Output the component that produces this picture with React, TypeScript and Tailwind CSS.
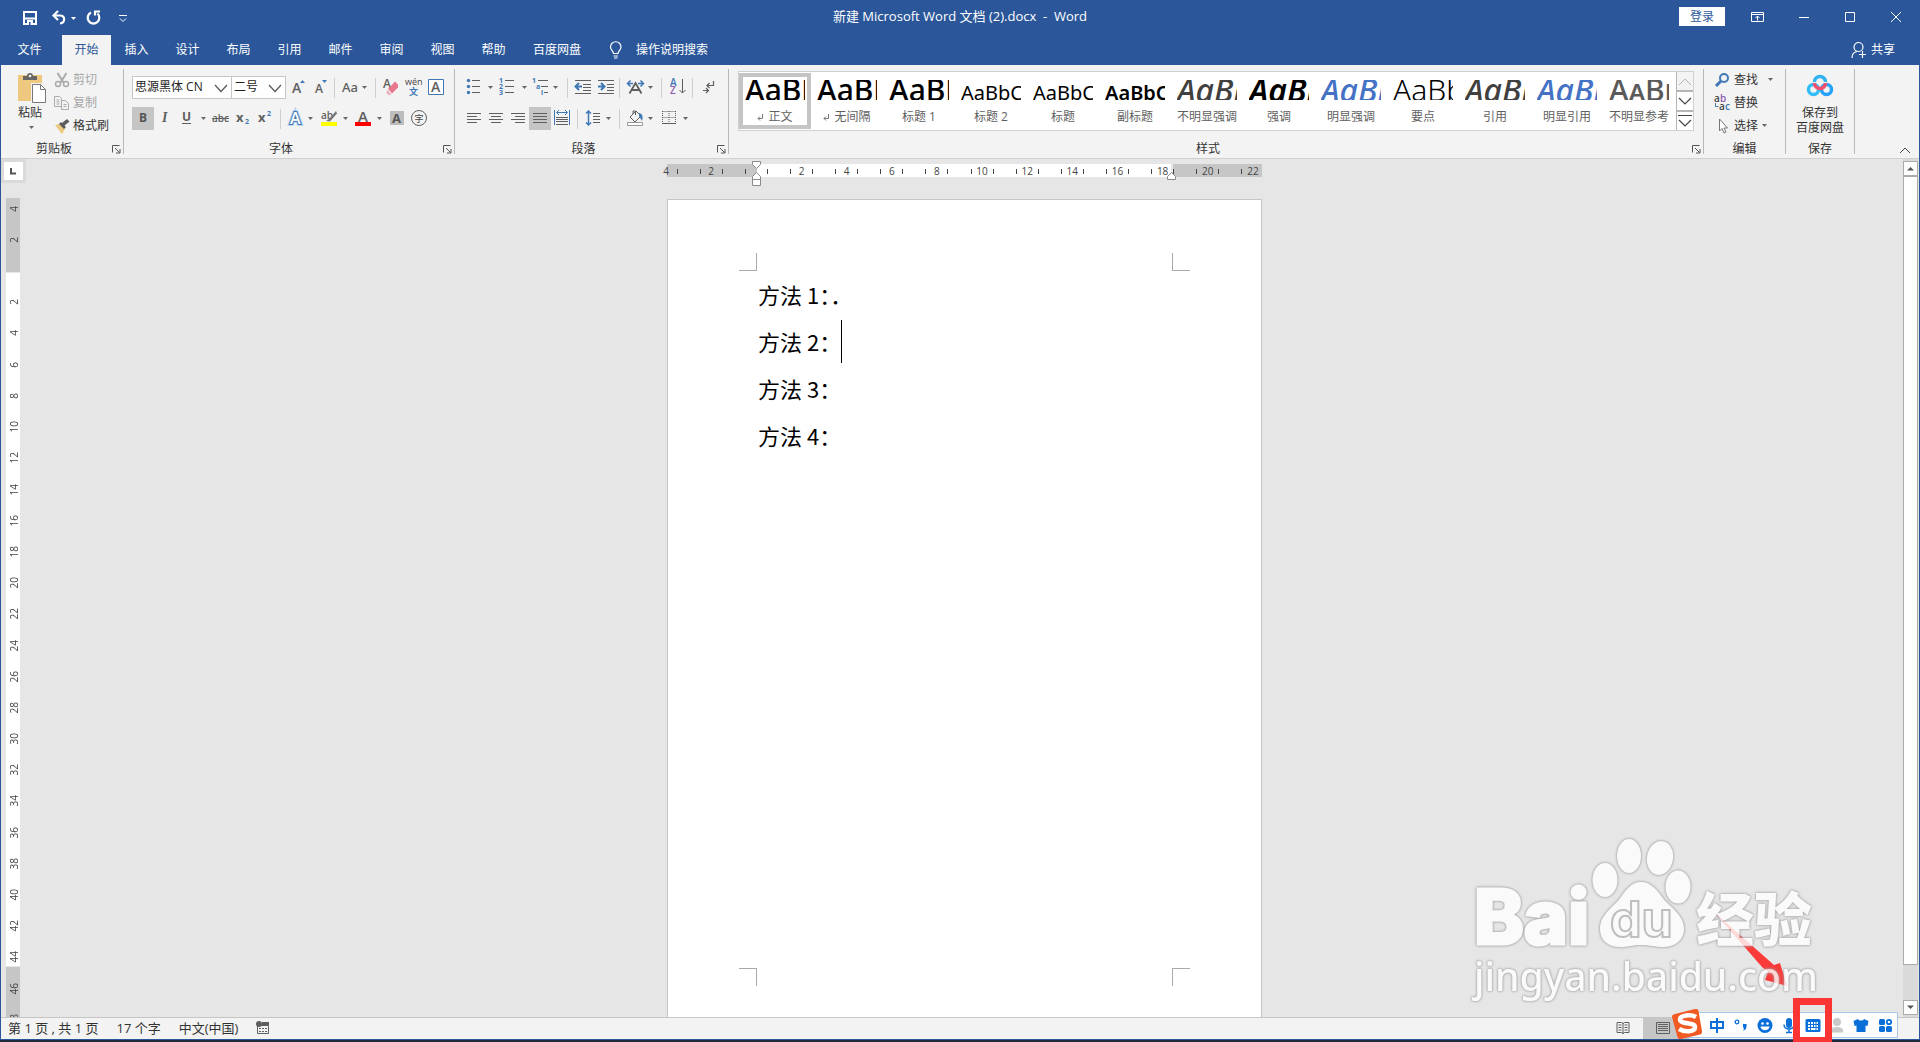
import React from "react";

const G = "#5f5f5f";
const B = "#3f78b5";
const SANS = '"Open Sans","Noto Sans CJK SC",sans-serif';

type IconProps = { w: number; h?: number; children: React.ReactNode };

function Icon({ w, h = 23, children }: IconProps) {
  return (
    <svg width={w} height={h} viewBox={`0 0 ${w} ${h}`} fill="none" fontFamily={SANS} aria-hidden="true" className="block shrink-0">
      {children}
    </svg>
  );
}

function Tool({ label, on, w, children }: { label: string; on?: boolean; w: number; children: React.ReactNode }) {
  return (
    <button type="button" aria-label={label} title={label} className={on ? "shrink-0 bg-[#c5c5c5]" : "shrink-0 hover:bg-[#dcdcdc]"}>
      <Icon w={w}>{children}</Icon>
    </button>
  );
}

const Drop = ({ x, y = 10 }: { x: number; y?: number }) => <path d={`M${x} ${y}h5l-2.5 3z`} fill="#666" />;

const Sep = ({ className }: { className: string }) => <div className={`h-5 w-px shrink-0 bg-[#cfcfcf] ${className}`} />;

const Launcher = ({ label }: { label: string }) => (
  <button type="button" aria-label={label} className="absolute right-0.5 bottom-1">
    <Icon w={9} h={9}>
      <path d="M.5 7.500V.5H7.500M3 3l4.500 4.500M8 4v4H4" stroke="#555" />
    </Icon>
  </button>
);

function Group({ name, className, launcher, children }: { name: string; className: string; launcher?: boolean; children: React.ReactNode }) {
  return (
    <section aria-label={name} className={`relative flex flex-col ${className}`}>
      <div className="h-[76px]">{children}</div>
      <div className={`flex h-4 items-center justify-center text-xs text-[#333] ${launcher ? "pr-4" : ""}`}>{name}</div>
      {launcher && <Launcher label={`${name}设置`} />}
    </section>
  );
}

const GroupLine = () => <div className="my-1 w-px shrink-0 bg-[#b8b8b8]" />;

const Lines = ({ rows, x = 4 }: { rows: [number, number][]; x?: number }) => (
  <>
    {rows.map(([a, b], i) => (
      <path key={i} d={`M${x + a} ${6.5 + i * 3}H${x + b}`} stroke={G} />
    ))}
  </>
);

const tabs = ["插入", "设计", "布局", "引用", "邮件", "审阅", "视图", "帮助"];

function TitleBar() {
  return (
    <header className="relative flex h-[35px] items-center justify-between bg-[#2b579a] text-xs text-white">
      <div className="flex h-7 items-center pl-[21px]">
        <button type="button" aria-label="保存">
          <Icon w={16} h={20}>
            <path d="M2 4h12v12H2zM3 10.500h10" stroke="#fff" strokeWidth="2" />
            <path d="M5 12h6v5H5z" fill="#fff" /><path d="M7 14h1.500v3H7z" fill="#2b579a" />
          </Icon>
        </button>
        <button type="button" aria-label="撤消" className="ml-3">
          <Icon w={28} h={20}>
            <path d="M8 3L3.500 7.500L8 12M4 7.500h6c5.500 0 5.500 7.500 0 8" stroke="#fff" strokeWidth="2.200" />
            <path d="M21 9h5l-2.500 3z" fill="#fff" />
          </Icon>
        </button>
        <button type="button" aria-label="重复" className="ml-2">
          <Icon w={16} h={20}>
            <path d="M5 4.500a5.800 5.800 0 1 0 6.500 1M9 2.500v5M8 3.500h6" stroke="#fff" strokeWidth="2.200" />
          </Icon>
        </button>
        <button type="button" aria-label="自定义快速访问工具栏" className="ml-4">
          <Icon w={10} h={20}>
            <path d="M1 7.500h8M2 10.500l3 3 3-3" stroke="#fff" />
          </Icon>
        </button>
      </div>
      <h1 className="absolute inset-x-40 top-2 whitespace-pre text-center text-[13px] leading-4 pointer-events-none">{"新建 Microsoft Word 文档 (2).docx  -  Word"}</h1>
      <div className="flex h-full items-center">
        <button type="button" className="mb-0.5 mr-[10px] h-[19px] w-[46px] bg-white text-[#2b579a]">登录</button>
        <button type="button" aria-label="功能区显示选项" className="flex w-[46px] items-center justify-center pb-0.5">
          <Icon w={14} h={12}>
            <path d="M.5 1.500h12v9H.5zM.5 3.500h12M6.500 9.500V5M4.500 7l2-2 2 2" stroke="#fff" />
          </Icon>
        </button>
        <button type="button" aria-label="最小化" className="flex w-[46px] justify-center ml-[3px] pb-0.5 mr-[-3px]">
          <Icon w={18} h={12}><path d="M1 6.500h10" stroke="#fff" /></Icon>
        </button>
        <button type="button" aria-label="最大化" className="flex w-[46px] justify-center pb-0.5">
          <Icon w={12} h={12}><path d="M1.500 1.500h9v9h-9z" stroke="#fff" /></Icon>
        </button>
        <button type="button" aria-label="关闭" className="flex w-[46px] justify-center pb-0.5">
          <Icon w={12} h={12}><path d="M1 1l10 10M11 1L1 11" stroke="#fff" /></Icon>
        </button>
      </div>
    </header>
  );
}

function TabBar() {
  return (
    <nav aria-label="功能区" className="flex h-[30px] items-stretch bg-[#2b579a] text-xs text-white">
      <button type="button" className="w-[61px] pr-1">文件</button>
      <button type="button" aria-current="page" className="w-[49px] bg-[#f3f3f3] text-[#2b579a]">开始</button>
      {tabs.map((t) => (
        <button key={t} type="button" className="w-[51px]">{t}</button>
      ))}
      <button type="button" className="w-[76px]">百度网盘</button>
      <button type="button" className="ml-[14px] flex items-center gap-[13px]">
        <Icon w={14} h={18}>
          <path d="M4.500 12.500c0-2.500-3-3.500-3-6.500a5 5 0 0 1 10.500 0c0 3-3 4-3 6.500zM4.500 15h4.500M5 17h3.500" stroke="#fff" strokeWidth="1.200" />
        </Icon>
        操作说明搜索
      </button>
      <button type="button" className="ml-auto mr-6 flex items-center gap-1">
        <Icon w={16} h={18}>
          <circle cx="7.500" cy="6" r="4.500" stroke="#fff" strokeWidth="1.200" />
          <path d="M1 17c0-4 2-6 5-6.500M11.500 10v7M8 13.500h7" stroke="#fff" strokeWidth="1.200" />
        </Icon>
        共享
      </button>
    </nav>
  );
}

function Clipboard() {
  return (
    <Group name="剪贴板" className="w-[122px]" launcher>
      <div className="flex pt-[3px]">
        <button type="button" className="ml-[15px] flex w-[33px] flex-col items-start text-xs text-[#333]">
          <Icon w={31} h={36}>
            <path d="M2 7h24v26H2z" fill="#edc87e" />
            <path d="M7 12V8h4a3 3 0 0 1 6 0h4v4z" fill="#666" />
            <circle cx="14" cy="8" r="1.300" fill="#f3f3f3" />
            <path d="M15 15h10l6 6v14H15z" fill="#f3f3f3" />
            <path d="M16.500 16.500h8l5 5v13h-13z" fill="#fff" stroke="#777" />
            <path d="M24.500 16.500v5h5" stroke="#777" />
          </Icon>
          <span className="ml-0.5 mt-px leading-4">粘贴</span>
          <span className="ml-[12px] mt-1"><Icon w={7} h={6}><Drop x={1} y={1} /></Icon></span>
        </button>
        <div className="ml-[5px] flex flex-col text-xs text-[#a6a6a6]">
          <button type="button" disabled className="flex h-[23px] items-center gap-[3px]">
            <Icon w={16} h={16}>
              <path d="M3.500 1l6 9.500M12.500 1l-6 9.500" stroke="#aaa" strokeWidth="2" />
              <circle cx="4" cy="12" r="2.500" stroke="#aaa" strokeWidth="1.500" /><circle cx="12" cy="12" r="2.500" stroke="#aaa" strokeWidth="1.500" />
            </Icon>
            剪切
          </button>
          <button type="button" disabled className="flex h-[23px] items-center gap-[3px]">
            <Icon w={16} h={16}>
              <path d="M.5 1.500h5l2 2v8H.5zM7.500 5.500h4l3 3v6h-7zM2.500 5h3M2.500 7h3M2.500 9h3M9.500 9.500h3M9.500 11.500h3" fill="#f3f3f3" stroke="#aaa" />
            </Icon>
            复制
          </button>
          <button type="button" className="flex h-[23px] items-center gap-[3px] text-[#333]">
            <Icon w={16} h={16}>
              <path d="M1 7l5-1 5 5-3 5z" fill="#edc87e" />
              <path d="M5 6l2-2 1 1 5-4 2.500 2.500-5 4 1.500 1.500-2 2z" fill="#5c5c5c" />
            </Icon>
            格式刷
          </button>
        </div>
      </div>
    </Group>
  );
}

function Combo({ label, value, className }: { label: string; value: string; className: string }) {
  return (
    <div className={`relative h-[23px] shrink-0 border border-[#c6c6c6] bg-white ${className}`}>
      <select aria-label={label} defaultValue={value} className="block h-[21px] w-full appearance-none bg-transparent pb-0.5 pl-0.5 text-xs text-[#222] outline-none">
        <option>{value}</option>
      </select>
      <span className="pointer-events-none absolute right-[3px] top-[7px]">
        <Icon w={14} h={9}><path d="M1 1l6 6.500L13 1" stroke="#555" strokeWidth="1.200" /></Icon>
      </span>
    </div>
  );
}

function FontGroup() {
  return (
    <Group name="字体" className="w-[330px]" launcher>
      <div className="flex items-center pl-2 pt-[11px]">
        <Combo label="字体名称" value="思源黑体 CN" className="w-[100px]" />
        <Combo label="字号" value="二号" className="-ml-px w-[55px]" />
        <Tool label="增大字号" w={24}>
          <text x="6" y="17" fontSize="14" fontWeight="600" fill={G}>A</text>
          <path d="M14 7h5l-2.500-3z" fill={B} />
        </Tool>
        <Tool label="减小字号" w={24}>
          <text x="5" y="17" fontSize="12" fontWeight="600" fill={G}>A</text>
          <path d="M12 4h5l-2.500 3z" fill={B} />
        </Tool>
        <Sep className="" />
        <Tool label="更改大小写" w={40}>
          <text x="7" y="16" fontSize="13" fontWeight="500" fontFamily="Noto Sans" fill={G}>Aa</text>
          <Drop x={27} />
        </Tool>
        <Sep className="mr-1" />
        <Tool label="清除所有格式" w={22}>
          <text x="3" y="12" fontSize="12" fontWeight="600" fill={G}>A</text>
          <path d="M8 13l7-7.500 3 3v3l-6 6z" fill="#e8798f" />
          <path d="M7 14l4.500 4.500-3 .5-2-2z" fill="#f0a8b5" />
        </Tool>
        <Tool label="拼音指南" w={23}>
          <text x="3" y="9" fontSize="9" fill="#444">wén</text>
          <text x="7" y="19" fontSize="9" fontWeight="700" fill={B}>文</text>
        </Tool>
        <Tool label="字符边框" w={22}>
          <path d="M3.500 3.500h15v15h-15z" stroke={B} fill="#fff" />
          <text x="6" y="16" fontSize="14" fontWeight="600" fill={G}>A</text>
        </Tool>
      </div>
      <div className="flex items-center pl-2 pt-2">
        <Tool label="加粗" on w={22}><text x="7" y="15" fontSize="12" fontWeight="700" fill="#555">B</text></Tool>
        <Tool label="倾斜" w={21}><text x="8" y="15" fontSize="14" fontWeight="700" fontStyle="italic" fontFamily="Liberation Serif" fill={G}>I</text></Tool>
        <Tool label="下划线" w={36}>
          <text x="7" y="14" fontSize="12" fontWeight="700" fill={G}>U</text>
          <path d="M7 16.500h9" stroke={G} /><Drop x={26} />
        </Tool>
        <Tool label="删除线" w={20}>
          <text x="1" y="15" fontSize="10" fontWeight="600" fill={G}>abc</text><path d="M1 11.500h17" stroke={G} />
        </Tool>
        <Tool label="下标" w={22}>
          <text x="5" y="15" fontSize="13" fontWeight="700" fill={G}>x</text><text x="14" y="17" fontSize="7" fontWeight="700" fill={B}>2</text>
        </Tool>
        <Tool label="上标" w={25}>
          <text x="5" y="15" fontSize="13" fontWeight="700" fill={G}>x</text><text x="14" y="9" fontSize="7" fontWeight="700" fill={B}>2</text>
        </Tool>
        <Sep className="ml-0.5" />
        <Tool label="文本效果" w={37}>
          <text x="9" y="17" fontSize="16" fontWeight="600" fill="#fff" stroke="#b9d5f0" strokeWidth="4">A</text>
          <text x="9" y="17" fontSize="16" fontWeight="600" fill="#fff" stroke={B} strokeWidth="2" paintOrder="stroke">A</text>
          <Drop x={27} />
        </Tool>
        <Tool label="突出显示" w={34}>
          <text x="3" y="12" fontSize="10" fontWeight="600" fill={G}>ab</text>
          <path d="M18 4l-7 8-3 2 4 .5 7-8z" fill="#777" /><path d="M3 15h16v4H3z" fill="#ff0" /><Drop x={25} />
        </Tool>
        <Tool label="字体颜色" w={35}>
          <text x="6" y="15" fontSize="15" fontWeight="600" fill={G}>A</text>
          <path d="M3 15h16v4H3z" fill="red" /><Drop x={25} />
        </Tool>
        <Tool label="字符底纹" w={21}>
          <path d="M3 4h14v14H3z" fill="#bdbdbd" />
          <text x="5" y="16" fontSize="13" fontWeight="700" fill="#555">A</text>
        </Tool>
        <Tool label="带圈字符" w={22}>
          <circle cx="11" cy="11" r="7.500" stroke={G} /><text x="6.500" y="14.500" fontSize="9" fill="#444">字</text>
        </Tool>
      </div>
    </Group>
  );
}

function ParagraphGroup() {
  return (
    <Group name="段落" className="w-[273px]" launcher>
      <div className="flex items-center pl-2 pt-[11px]">
        <Tool label="项目符号" w={34}>
          {[4, 10, 16].map((y) => (
            <React.Fragment key={y}><circle cx="5.500" cy={y + 0.5} r="1.700" fill={B} /><path d={`M9 ${y + 0.5}h8`} stroke={G} /></React.Fragment>
          ))}
          <Drop x={25} />
        </Tool>
        <Tool label="编号" w={34}>
          {[4, 10, 16].map((y, i) => (
            <React.Fragment key={y}><text x="2" y={y + 3} fontSize="7" fontWeight="700" fill={B}>{i + 1}</text><path d={`M8 ${y + 0.5}h9`} stroke={G} /></React.Fragment>
          ))}
          <Drop x={25} />
        </Tool>
        <Tool label="多级列表" w={36}>
          <text x="1" y="7" fontSize="7" fontWeight="700" fill={B}>1</text><text x="5" y="13" fontSize="7" fontWeight="700" fill={B}>a</text><text x="10" y="19" fontSize="7" fontWeight="700" fill={B}>i</text>
          <path d="M7 4.500h10M10 10.500h7M13 16.500h4" stroke={G} /><Drop x={22} />
        </Tool>
        <Sep className="mr-1" />
        <Tool label="减少缩进量" w={23}>
          <path d="M3 4.500h16M11 8.500h8M11 11.500h8M11 14.500h8M3 17.500h16" stroke={G} /><path d="M10 10.500H4M7 7l-3.500 3.500L7 14" stroke={B} strokeWidth="2" />
        </Tool>
        <Tool label="增加缩进量" w={24}>
          <path d="M3 4.500h16M12 8.500h7M12 11.500h7M12 14.500h7M3 17.500h16" stroke={G} /><path d="M3 10.500h6M6 7l3.500 3.500L6 14" stroke={B} strokeWidth="2" />
        </Tool>
        <Sep className="" />
        <Tool label="中文版式" w={41}>
          <path d="M9.500 17.500l6-10.500 6 10.500M12 14h7" stroke={G} strokeWidth="1.800" />
          <path d="M13 7.500H8M10.500 4.500l-3 3 3 3M18 7.500h5M20.500 4.500l3 3-3 3" stroke={B} strokeWidth="1.500" /><Drop x={28} />
        </Tool>
        <Sep className="" />
        <Tool label="排序" w={30}>
          <text x="8" y="10" fontSize="10" fontWeight="600" fill={B}>A</text><text x="8" y="18" fontSize="10" fontWeight="600" fill="#8e5bb0">Z</text>
          <path d="M20.500 3v14M17.500 14l3 3 3-3" stroke={G} />
        </Tool>
        <Sep className="" />
        <Tool label="显示编辑标记" w={30}>
          <path d="M20.500 5v4.500H14M16.500 7L14 9.500l2.500 2.500M10 14.500h6M13 12l2.500 2.500L13 17" stroke={G} strokeWidth="1.200" />
        </Tool>
      </div>
      <div className="flex items-center pl-2 pt-2">
        <Tool label="左对齐" w={22}><Lines rows={[[0, 14], [0, 10], [0, 14], [0, 10]]} /></Tool>
        <Tool label="居中" w={22}><Lines rows={[[0, 14], [2, 12], [0, 14], [2, 12]]} /></Tool>
        <Tool label="右对齐" w={22}><Lines rows={[[0, 14], [4, 14], [0, 14], [4, 14]]} /></Tool>
        <Tool label="两端对齐" on w={22}><Lines rows={[[0, 14], [0, 14], [0, 14], [0, 14]]} /></Tool>
        <Tool label="分散对齐" w={26}>
          <path d="M3.500 3v15M18.500 3v15M6 5.500h10M8 3L5.500 5.500L8 8M14 3l2.500 2.500L14 8" stroke={B} />
          <path d="M5 10.500h12M5 12.500h12M5 14.500h12M5 17.500h12" stroke={G} />
        </Tool>
        <Sep className="" />
        <Tool label="行距" w={41}>
          <path d="M10.500 4v14M8 6.500L10.500 4L13 6.500M8 15.500l2.500 2.500 2.500-2.500" stroke={B} strokeWidth="1.500" />
          <path d="M15 6.500h7M15 9.500h7M15 12.500h7M15 15.500h7" stroke={G} /><Drop x={28} />
        </Tool>
        <Sep className="" />
        <Tool label="底纹" w={41}>
          <path d="M10 10l6-6 5 5-6 6zM13 7V4h2.500v4" stroke={G} /><path d="M19 6c4 1 4 4 3 8l-3-5z" fill={B} />
          <path d="M7.500 15.500h15v3h-15z" fill="#fff" stroke="#999" /><Drop x={28} />
        </Tool>
        <Tool label="边框" w={34}>
          <path d="M1.500 4.500h13M1.500 10.500h13M1.500 4v12M8 4v12M14.500 4v12" stroke={G} strokeDasharray="1 1" /><path d="M1 16.500h14" stroke={G} /><Drop x={22} />
        </Tool>
      </div>
    </Group>
  );
}

const BIG = "text-[30px] leading-[20px]";
const SLANT = "text-[32px] leading-[20px] italic";
const SMALL = "text-xl leading-[14px]";

const styles: { name: string; sample: string; size: string; look: string; mark?: boolean }[] = [
  { name: "正文", sample: "AaBb", size: BIG, look: "font-medium text-black", mark: true },
  { name: "无间隔", sample: "AaBb", size: BIG, look: "font-medium text-black", mark: true },
  { name: "标题 1", sample: "AaBb", size: BIG, look: "font-medium text-black" },
  { name: "标题 2", sample: "AaBbC", size: SMALL, look: "text-black" },
  { name: "标题", sample: "AaBbC", size: SMALL, look: "text-black" },
  { name: "副标题", sample: "AaBbC", size: SMALL, look: "font-semibold text-black" },
  { name: "不明显强调", sample: "AaBb", size: SLANT, look: "font-medium text-[#404040]" },
  { name: "强调", sample: "AaBb", size: SLANT, look: "font-semibold text-black" },
  { name: "明显强调", sample: "AaBb", size: SLANT, look: "font-medium text-[#4472c4]" },
  { name: "要点", sample: "AaBb", size: BIG, look: "font-light text-black" },
  { name: "引用", sample: "AaBb", size: SLANT, look: "font-medium text-[#404040]" },
  { name: "明显引用", sample: "AaBb", size: SLANT, look: "font-medium text-[#4472c4]" },
  { name: "不明显参考", sample: "AaBb", size: BIG, look: "font-medium [font-variant:small-caps] text-[#5a5a5a]" },
];

function StylesGroup() {
  return (
    <Group name="样式" className="min-w-0 flex-1" launcher>
      <div className="mx-[9px] mt-1.5 flex h-[60px] border border-[#d0d0d0] bg-white">
        <div className="flex min-w-0 flex-1 overflow-hidden">
          {styles.map((s, i) => (
            <button
              key={s.name}
              type="button"
              aria-pressed={i === 0}
              className={`mt-px flex h-[56px] w-[72px] shrink-0 flex-col items-center border-4 ${i === 0 ? "border-[#c5c5c5]" : "border-transparent"}`}
            >
              <span className="mt-[3px] flex h-5 w-[60px] items-end overflow-hidden font-['Noto_Sans',sans-serif]">
                <span className={`${s.size} ${s.look}`}>{s.sample}</span>
              </span>
              <span className="mt-[9px] flex whitespace-nowrap text-xs leading-4 text-[#5f5f5f]">
                {s.mark && (
                  <span className="mr-1 mt-1"><Icon w={7} h={8}><path d="M5.500 1v4.500H1M3 3.500l-2 2 2 2" stroke="#777" /></Icon></span>
                )}
                {s.name}
              </span>
            </button>
          ))}
        </div>
        <div className="flex w-[17px] flex-col divide-y-2 divide-[#b5b5b5] border-l border-[#b5b5b5]">
          <button type="button" aria-label="上一行" className="flex flex-1 items-center justify-center bg-[#f3f3f3]"><Icon w={14} h={9}><path d="M1 8l6-6 6 6" stroke="#b5b5b5" /></Icon></button>
          <button type="button" aria-label="下一行" className="flex flex-1 items-center justify-center"><Icon w={14} h={9}><path d="M1 1l6 6 6-6" stroke="#444" strokeWidth="1.200" /></Icon></button>
          <button type="button" aria-label="其他" className="flex flex-1 items-center justify-center"><Icon w={16} h={14}><path d="M1 1.500h14M2 6l6 6 6-6" stroke="#444" strokeWidth="1.200" /></Icon></button>
        </div>
      </div>
    </Group>
  );
}

function EditGroup() {
  return (
    <Group name="编辑" className="w-[81px]">
      <div className="flex flex-col items-start pl-[10px] pt-[3px] text-xs text-[#333]">
        <button type="button" className="flex h-[23px] items-center gap-1">
          <Icon w={16} h={16}><circle cx="10" cy="6" r="4" stroke={B} strokeWidth="2" /><path d="M7 9l-5 5" stroke={B} strokeWidth="3" /></Icon>
          查找
          <span className="ml-[5px]"><Icon w={7} h={6}><Drop x={1} y={1} /></Icon></span>
        </button>
        <button type="button" className="flex h-[23px] items-center gap-1">
          <Icon w={16} h={18}>
            <text x="0" y="8" fontSize="10" fontWeight="600" fill="#444">a</text><text x="6" y="8" fontSize="10" fontWeight="600" fill="#8e5bb0">b</text>
            <text x="5" y="16" fontSize="10" fontWeight="600" fill="#444">a</text><text x="11" y="16" fontSize="10" fontWeight="600" fill={B}>c</text>
            <path d="M1.500 9v3.500h3" stroke={B} />
          </Icon>
          替换
        </button>
        <button type="button" className="flex h-[23px] items-center gap-1">
          <Icon w={16} h={16}><path d="M5.500 1v12l2.500-2.500 2 4.500 2-1-2-4h3.500z" fill="#fff" stroke="#777" /></Icon>
          选择
          <Icon w={7} h={6}><Drop x={0} y={1} /></Icon>
        </button>
      </div>
    </Group>
  );
}

function Ribbon() {
  return (
    <div className="flex h-[94px] border-b border-[#d0d0d0] bg-[#f3f3f3]">
      <Clipboard />
      <GroupLine />
      <FontGroup />
      <GroupLine />
      <ParagraphGroup />
      <GroupLine />
      <StylesGroup />
      <GroupLine />
      <EditGroup />
      <GroupLine />
      <Group name="保存" className="w-[68px]">
        <button type="button" className="flex w-full flex-col items-center pt-[9px] text-xs leading-[15px] text-[#333]">
          <Icon w={28} h={24}>
            <circle cx="7.500" cy="15.500" r="5" stroke="#33bdf5" strokeWidth="3.500" />
            <circle cx="20.500" cy="15.500" r="5" stroke="#27a2fb" strokeWidth="3.500" />
            <path d="M8.500 8a5.500 5.500 0 0 1 11 0" stroke="#2fb4f0" strokeWidth="3.500" />
            <path d="M8.500 9a5.500 5.500 0 0 0 11 0" stroke="#f4506e" strokeWidth="3.500" />
          </Icon>
          <span className="mt-[7px]">保存到</span>
          <span>百度网盘</span>
        </button>
      </Group>
      <GroupLine />
      <div className="flex w-[64px] items-end justify-end pr-2 pb-1">
        <button type="button" aria-label="折叠功能区"><Icon w={12} h={7}><path d="M1 6l5-5 5 5" stroke="#444" /></Icon></button>
      </div>
    </div>
  );
}

const hMarks = Array.from({ length: 14 }, (_, i) => (i - 2) * 2);
const vMarks = Array.from({ length: 27 }, (_, i) => (i - 2) * 2);

function HorizontalRuler() {
  return (
    <div className="relative flex h-[13px] w-[595px] shrink-0">
      <div className="w-[90px] bg-[#c6c6c6]" />
      <div className="flex-1 bg-white" />
      <div className="w-[91px] border-l-2 border-[#e6e6e6] bg-[#c6c6c6]" />
      <div className="absolute inset-y-0 -left-[23px] flex w-[632px] text-[10px] leading-[15px] text-[#444]">
        {hMarks.map((n, i) => (
          <div key={n} className="flex flex-1 items-center justify-center pt-px">
            {n === 0 ? (
              <div className="flex w-[23px] justify-between"><span className="h-[5px] w-px bg-[#444]" /><span className="h-[5px] w-px bg-[#444]" /></div>
            ) : (
              <div className="flex w-[23px] items-center justify-between">
                <span className={`h-[5px] w-px ${i === 0 ? "bg-transparent" : "bg-[#444]"}`} />
                <span>{Math.abs(n)}</span>
                <span className={`h-[5px] w-px ${i === 13 ? "bg-transparent" : "bg-[#444]"}`} />
              </div>
            )}
          </div>
        ))}
      </div>
      <div className="absolute -top-[3px] left-[85px]">
        <Icon w={9} h={25}>
          <path d="M.5.500h8v3L4.500 7.500L.5 3.500zM4.500 11.500l4 4v3h-8v-3zM.5 18.500h8v6h-8z" fill="#fff" stroke="#8a8a8a" />
        </Icon>
      </div>
      <div className="absolute left-[500px] top-2">
        <Icon w={9} h={9}><path d="M4.500.5l4 4v3h-8v-3z" fill="#fff" stroke="#8a8a8a" /></Icon>
      </div>
    </div>
  );
}

function VerticalRuler() {
  return (
    <div className="relative ml-[5px] mt-[15px] flex min-h-0 w-[14px] flex-1 flex-col overflow-hidden">
      <div className="h-[75px] border-b border-[#e6e6e6] bg-[#c6c6c6]" />
      <div className="flex-1 bg-white" />
      <div className="h-[51px] border-t border-[#e6e6e6] bg-[#c6c6c6]" />
      <div className="absolute -top-[5px] left-px flex h-[842px] w-full flex-col text-[10px] leading-[14px] text-[#444]">
        {vMarks.map((n) => (
          <div key={n} className="flex flex-1 items-center justify-center">
            <span className="rotate-180 [writing-mode:vertical-rl]">{n === 0 ? "" : Math.abs(n)}</span>
          </div>
        ))}
      </div>
    </div>
  );
}

function Page() {
  return (
    <main className="mt-[22px] ml-px flex w-[595px] flex-1 flex-col border border-b-0 border-[#c6c6c6] bg-white px-[71px] pt-[53px] pb-[31px]">
      <div className="flex justify-between">
        <div className="size-[18px] border-b border-r border-[#aaa]" />
        <div className="size-[18px] border-b border-l border-[#aaa]" />
      </div>
      <article lang="zh-CN" className="flex-1 px-[19px] font-['Noto_Sans_CJK_SC',sans-serif] text-[22px] leading-[47px] text-black">
        <p>方法 1：．</p>
        <p className="flex items-center">方法 2：<span className="h-[43px] w-px bg-black" /></p>
        <p>方法 3：</p>
        <p>方法 4：</p>
      </article>
      <div className="flex justify-between">
        <div className="size-[18px] border-r border-t border-[#aaa]" />
        <div className="size-[18px] border-l border-t border-[#aaa]" />
      </div>
    </main>
  );
}

function ScrollBar() {
  return (
    <div className="mr-px flex w-[15px] shrink-0 flex-col bg-[#dadada] py-0.5">
      <button type="button" aria-label="向上滚动" className="flex h-[15px] items-center justify-center border border-[#ababab] bg-white"><Icon w={7} h={5}><path d="M0 4.500h7L3.500 1z" fill="#555" /></Icon></button>
      <div className="h-[789px] border border-[#ababab] bg-white" />
      <div className="flex-1" />
      <button type="button" aria-label="向下滚动" className="flex h-[15px] items-center justify-center border border-[#ababab] bg-white"><Icon w={7} h={5}><path d="M0 .5h7L3.500 4z" fill="#555" /></Icon></button>
    </div>
  );
}

function Watermark() {
  return (
    <svg width="360" height="180" viewBox="0 0 360 180" aria-label="Baidu 经验 jingyan.baidu.com" className="absolute bottom-[26px] right-[95px] opacity-80 [filter:drop-shadow(0_0_1px_#999)_drop-shadow(0_0_1px_#aaa)]">
      <g fill="#fff">
        <text x="9" y="108" fontFamily="Inter" fontWeight="800" fontSize="75" stroke="#fff" strokeWidth="3">Bai</text>
        <ellipse cx="140" cy="44" rx="12.500" ry="17" />
        <ellipse cx="164" cy="20" rx="12" ry="17" />
        <ellipse cx="195" cy="22" rx="13" ry="17" transform="rotate(10 195 22)" />
        <ellipse cx="213" cy="51" rx="12.500" ry="16.500" />
        <path d="M176 46c-10 0-15 8-20 15-7 10-21 17-21 32 0 12 9 18 20 18 9 0 12-2 21-2s14 2 22 2c12 0 21-7 21-18 0-15-15-22-22-32-5-7-11-15-21-15z" />
      </g>
      <text x="145" y="101" fontFamily="Inter" fontWeight="700" fontSize="50" fill="#fff" stroke="#b5b5b5" strokeWidth="2">du</text>
      <text x="231" y="105" fontFamily="Noto Sans CJK SC" fontWeight="900" fontSize="58" fill="#fff">经验</text>
      <text x="9" y="155" fontFamily="Noto Sans" fontWeight="500" fontSize="39" fill="#fff">jingyan.baidu.com</text>
    </svg>
  );
}

const BLUE = "#0a6fd8";

const imeKeys: { label: string; art: React.ReactNode }[] = [
  { label: "中文输入", art: <path d="M8 1v15M2 5h12v6H2z" stroke={BLUE} strokeWidth="2" /> },
  { label: "标点", art: <><circle cx="4" cy="5" r="1.800" stroke={BLUE} strokeWidth="1.300" /><path d="M10 7h3.500c.5 4-1 6-3.500 7 1-1.500 1-2.500.5-3.500H10z" fill={BLUE} /></> },
  { label: "表情", art: <><circle cx="8" cy="8.500" r="7.500" fill={BLUE} /><circle cx="5.500" cy="6.500" r="1.300" fill="#fff" /><circle cx="10.500" cy="6.500" r="1.300" fill="#fff" /><path d="M3.500 9.500h9c-.5 5-8.500 5-9 0z" fill="#fff" /></> },
  { label: "语音", art: <><path d="M5 4a3 3 0 0 1 6 0v4a3 3 0 0 1-6 0z" fill={BLUE} /><path d="M3 7.500c0 6 10 6 10 0M8 12v3M5 15.500h6" stroke={BLUE} strokeWidth="1.500" /></> },
  { label: "软键盘", art: <><rect x=".5" y="2" width="15" height="13" rx="1.500" fill={BLUE} /><path d="M3 5h2v2H3zM6 5h2v2H6zM9 5h1.500v2H9zM11.500 5H13v2h-1.500zM3 8h2v2H3zM6 8h2v2H6zM9 8h1.500v2H9zM11.500 8H13v2h-1.500zM3 11h2v2H3zM6 11h4.500v2H6zM11.500 11H13v2h-1.500z" fill="#fff" /></> },
  { label: "用户", art: <g fill="#c9c9c9"><circle cx="8" cy="5" r="4" /><path d="M2 15.500v-2.500c0-4 12-4 12 0v2.500z" /></g> },
  { label: "皮肤", art: <path d="M5 2c1 2 5 2 6 0l4.500 2-1 5-2-.5V15h-9V8.500l-2 .5-1-5z" fill={BLUE} /> },
  { label: "工具箱", art: <><rect x="2" y="2" width="6" height="6" rx="1.500" fill={BLUE} /><rect x="2" y="9" width="6" height="6" rx="1.500" fill={BLUE} /><rect x="9" y="9" width="6" height="6" rx="1.500" fill={BLUE} /><circle cx="12" cy="5" r="2.200" stroke={BLUE} strokeWidth="1.800" /></> },
];

function ImeBar() {
  return (
    <div className="absolute bottom-1 right-[22px] flex h-[26px] w-[214px] items-center border border-[#a9c8ea] bg-white pr-1 pl-6">
      <div className="absolute -left-[14px] -top-[5px]">
        <Icon w={32} h={32}>
          <path d="M4 6l20-5c2 0 3 0 3.500 2L31 23c0 2 0 3-2 3.500L10 31c-2 0-3 0-3.500-2L1 9c0-2 1-2.500 3-3z" fill="#f15a22" />
          <path d="M25 9c-5-3-16-2-16 2.500 0 5 15 2.500 15 7.500 0 5-10 5.500-16 2" stroke="#fff" strokeWidth="4.500" />
        </Icon>
      </div>
      <div className="flex flex-1 items-center justify-between">
        {imeKeys.map((k) => (
          <button key={k.label} type="button" aria-label={k.label}>
            <Icon w={16} h={17}>{k.art}</Icon>
          </button>
        ))}
      </div>
    </div>
  );
}

function StatusBar() {
  return (
    <footer className="flex h-[22px] shrink-0 items-center border-t border-[#c6c6c6] bg-[#f3f3f3] pl-[7px] text-[13px] leading-4 text-[#333]">
      <div className="flex items-center gap-[18px] pb-0.5">
        <span>第 1 页 , 共 1 页</span>
        <span>17 个字</span>
        <span>中文(中国)</span>
        <button type="button" aria-label="宏录制">
          <Icon w={14} h={14}>
            <path d="M1.500 4.500h11v8h-11z" stroke={G} /><path d="M6 1h7v3H6z" fill={G} /><circle cx="3" cy="3" r="3" fill={G} />
            <path d="M3 7.500h8M3 10.500h8" stroke={G} strokeDasharray="2 1" />
          </Icon>
        </button>
      </div>
      <button type="button" aria-label="阅读视图" className="ml-auto mr-[13px] pb-0.5">
        <Icon w={14} h={14}><path d="M1 1.500h4.500l1.500 1 1.500-1H13v10H8.500l-1.500 1-1.500-1H1zM7 2v11M2.500 4h3M2.500 6.500h3M2.500 9h3M8.500 4h3M8.500 6.500h3M8.500 9h3" stroke={G} /></Icon>
      </button>
      <button type="button" aria-label="页面视图" className="mr-[230px] flex h-full w-[46px] items-center bg-[#c6c6c6] pb-0.5 pl-[13px]">
        <Icon w={14} h={14}><path d="M.5 1.500h13v11H.5zM2 3.500h10M2 5.500h10M2 7.500h10M2 9.500h10" stroke={G} /></Icon>
      </button>
    </footer>
  );
}

export default function App() {
  return (
    <div className="relative flex h-screen flex-col overflow-hidden bg-[#1d2b3a] font-['Open_Sans','Noto_Sans_CJK_SC',sans-serif]">
      <div className="flex min-h-0 flex-1 flex-col border-x border-b border-[#2b579a] bg-[#e6e6e6]">
        <TitleBar />
        <TabBar />
        <Ribbon />
        <div className="flex min-h-0 flex-1">
          <div className="flex w-[25px] shrink-0 flex-col">
            <button type="button" aria-label="制表符" className="flex h-6 items-center justify-center border-[3px] border-[#dadada] bg-white">
              <Icon w={8} h={8}><path d="M1 1v5.500h5" stroke="#555" strokeWidth="2" /></Icon>
            </button>
            <VerticalRuler />
          </div>
          <div className="flex min-w-0 flex-1 flex-col items-center pt-[5px] pr-px">
            <HorizontalRuler />
            <Page />
          </div>
          <ScrollBar />
        </div>
        <StatusBar />
      </div>
      <div className="h-0.5 shrink-0" />
      <svg width="80" height="80" viewBox="0 0 80 80" aria-hidden="true" className="absolute bottom-[52px] right-[128px]">
        <path d="M3 3l59 52 6-2 7 23-22-6 3-8-6-5z" fill="#fb3a3a" />
      </svg>
      <Watermark />
      <ImeBar />
      <div className="pointer-events-none absolute bottom-0 right-[88px] h-11 w-[39px] border-[7px] border-b-[5px] border-[#fb3434]" />
    </div>
  );
}
